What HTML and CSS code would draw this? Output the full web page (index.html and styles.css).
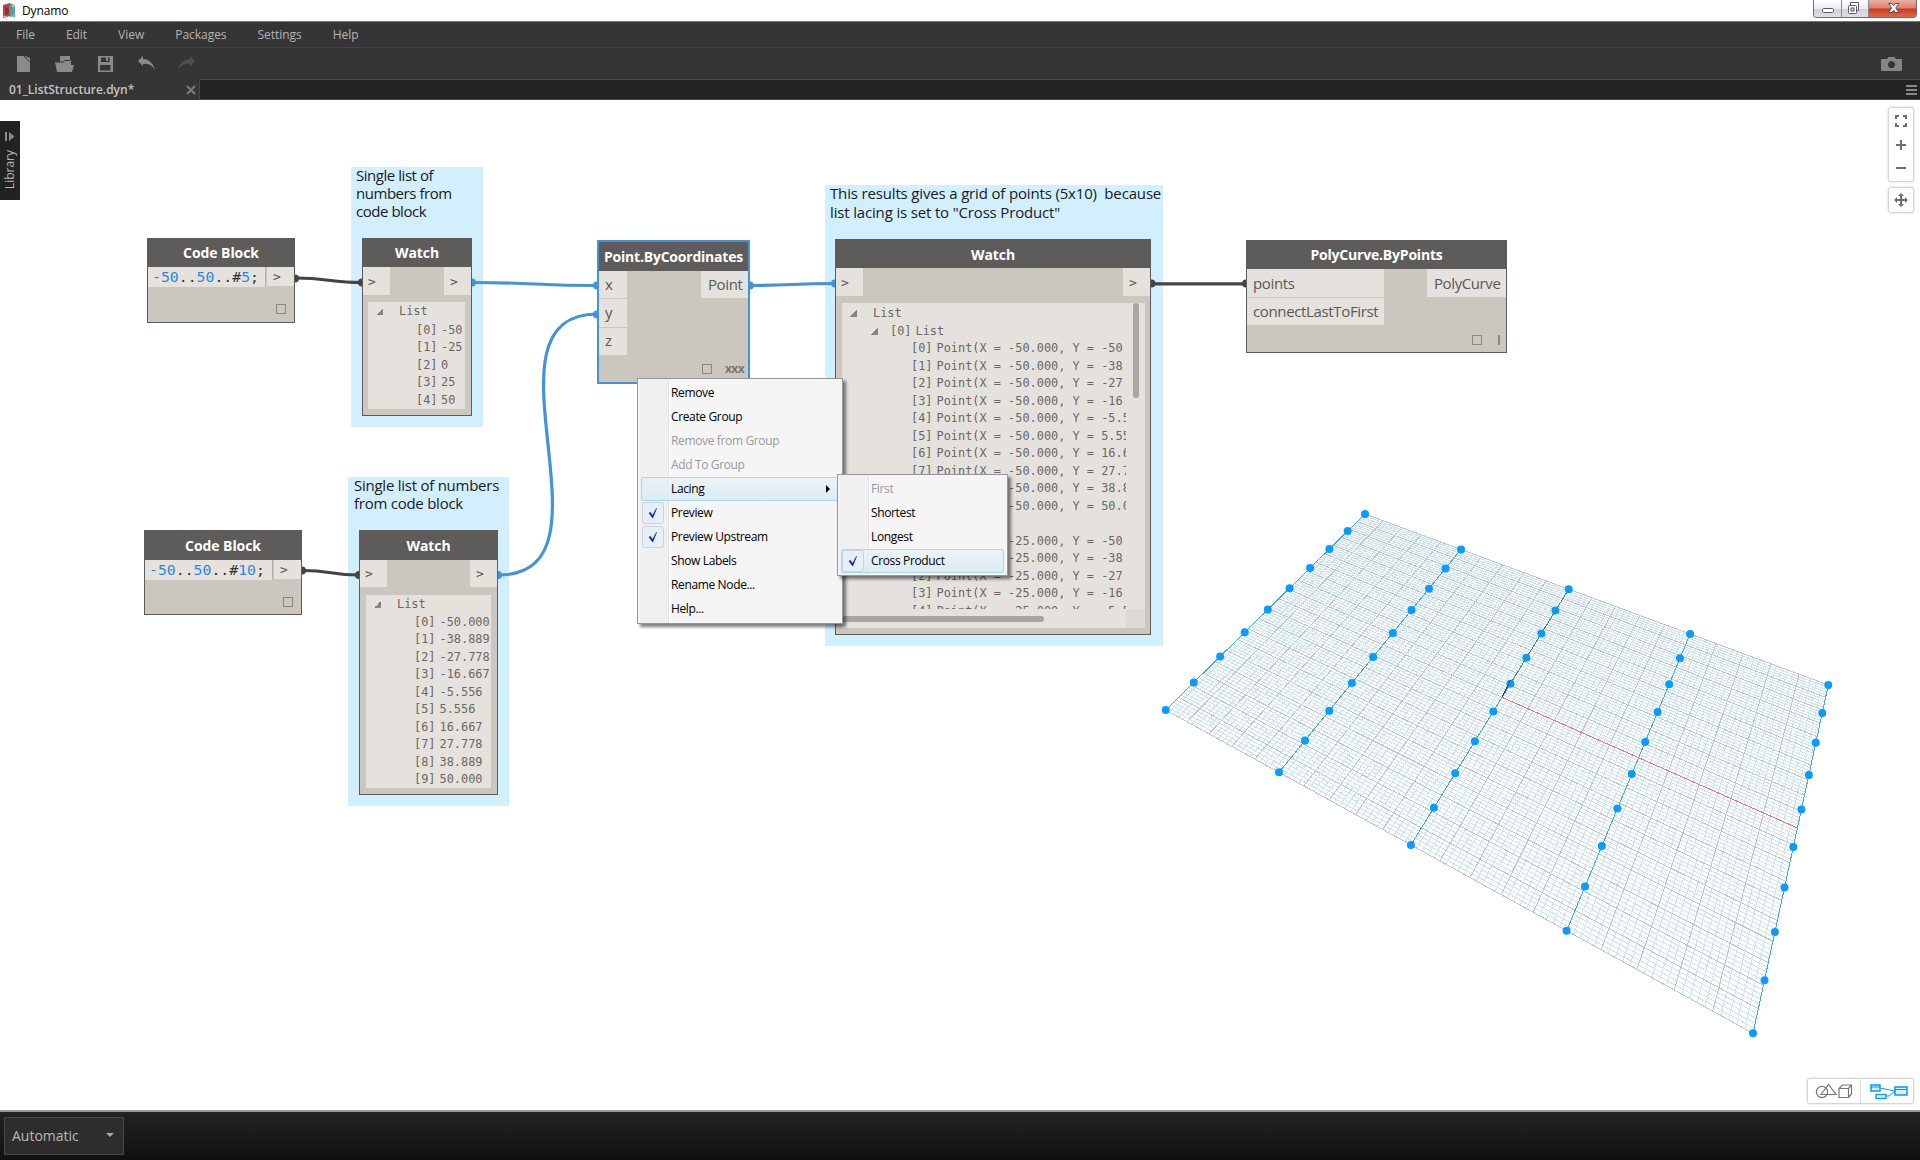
FILE: index.html
```html
<!DOCTYPE html>
<html lang="en">
<head>
<meta charset="utf-8">
<title>Dynamo</title>
<link rel="stylesheet" href="styles.css">
</head>
<body>
<div class="app">
  <header class="titlebar">
    <svg class="logo" width="14" height="17" viewBox="0 0 14 17"><path d="M1 3 8 1v13l-7 2z" fill="#b5474c"/><path d="M8 1l5 2v11l-5 1z" fill="#5d9fa8"/><path d="M3 4l4 3v4l-4 3z" fill="#8f2f3a"/><path d="M7 3l3 4-3 5z" fill="#6b8f5a"/><circle cx="3" cy="15" r="1.6" fill="#d9b8ae"/><circle cx="12" cy="14" r="1.6" fill="#8fb8ad"/><circle cx="11.500" cy="4" r="1.500" fill="#a7cbd8"/></svg>
    <span class="app-name">Dynamo</span>
    <div class="win-buttons">
      <span class="win min"><svg width="27" height="17"><rect x="8.500" y="8.500" width="11" height="4" rx="1" fill="#fff" stroke="#5a5a6c"/></svg></span>
      <span class="win max"><svg width="26" height="17"><path d="M8.500 5v-2.500h8v8h-2.500" fill="#fff" stroke="#5a5a6c"/><rect x="6.500" y="5.500" width="8" height="8" rx="1" fill="#fff" stroke="#5a5a6c"/><rect x="9" y="8" width="3" height="3" fill="#ddd" stroke="#5a5a6c"/></svg></span>
      <span class="win close"><svg width="47" height="17"><path d="M19.500 3.500h3.500l1.700 2.200 1.700-2.200h3.500l-3.200 4.400 3.200 4.600h-3.500l-1.700-2.400-1.700 2.400h-3.500l3.200-4.600z" fill="#fff" stroke="#5c4a54"/></svg></span>
    </div>
  </header>
  <nav class="menubar"><span>File</span><span>Edit</span><span>View</span><span>Packages</span><span>Settings</span><span>Help</span></nav>
  <div class="toolbar">
    <svg class="tools" width="200" height="30" fill="#8a8a8a">
      <path d="M17 8h8l5 6v10H17zM25 8l5 2v4z"/><path d="M24 8l5.500 6" stroke="#353535" fill="none"/>
      <path d="M60 8h10v6h-4l-2 2h-4zM55 14h8l2-2h6v12H57zM70 17h4l-2 7h-3z"/><path d="M56 14h7l2-1.500h5" stroke="#353535" fill="none"/>
      <path fill-rule="evenodd" d="M98 8h15v16H98zM101 9.500v4.500h8.500V9.500zM100 17v5.500h10.500V17z"/><rect x="106" y="9" width="2" height="4"/>
      <path d="M138 13l5-5v3c6 0 10 4 12 11-3-5-7-7-12-6v2z"/>
      <path d="M195 13l-5-5v3c-6 0-10 4-12 11 3-5 7-7 12-6v2z" fill="#505050"/>
    </svg>
    <svg class="camera" width="21" height="15"><path fill-rule="evenodd" fill="#858585" d="M1 2h5l1.500-2h6L15 2h5q1 0 1 1v10q0 1-1 1H1q-1 0-1-1V3q0-1 1-1zM10.500 4a3.600 3.600 0 1 0 .01 0z"/></svg>
  </div>
  <div class="tabbar">
    <div class="tab"><span>01_ListStructure.dyn*</span><svg width="10" height="10"><path d="M1 1l8 8M9 1l-8 8" stroke="#7c7c7c" stroke-width="2"/></svg></div>
    <svg class="burger" width="11" height="10"><path d="M0 1h11M0 5h11M0 9h11" stroke="#888" stroke-width="2"/></svg>
  </div>

  <main class="canvas">
    <svg class="scene" width="1920" height="1010" viewBox="0 100 1920 1010">
      <g id="grid"></g>
    </svg>

    <section class="group g1"><p>Single list of<br>numbers from<br>code block</p></section>
    <section class="group g2"><p>Single list of numbers<br>from code block</p></section>
    <section class="group g3"><p>This results gives a grid of points (5x10)&nbsp; because<br>list lacing is set to "Cross Product"</p></section>

    <svg class="scene wires" width="1920" height="1010" viewBox="0 100 1920 1010">
      <g stroke="#454442" fill="#454442">
        <path d="M296 278C325 278 332 282.500 362 282.500"/><circle cx="295" cy="278.500" r="4"/><circle cx="362" cy="282.500" r="4"/>
        <path d="M303 570.500C330 570.500 332 575 358 575"/><circle cx="302" cy="570.500" r="4"/><circle cx="359" cy="575" r="4"/>
        <path d="M1152 283.800H1246"/><circle cx="1151.500" cy="283.500" r="4"/><circle cx="1246" cy="283.500" r="4"/>
      </g>
      <g stroke="#4393da" fill="#4393da">
        <path d="M473 282.500C535 282.500 535 285.500 597 285.500"/><circle cx="472" cy="282.500" r="4"/><circle cx="597" cy="285.500" r="4"/>
        <path d="M499 575C625 575 471 314 597 314"/><circle cx="498" cy="575" r="4"/><circle cx="597" cy="314.500" r="4"/>
        <path d="M750 285.500C792 285.500 792 283.500 835 283.500"/><circle cx="750" cy="285.500" r="4"/><circle cx="835" cy="283.500" r="4"/>
      </g>
    </svg>

    <article class="node code c1">
      <h2>Code Block</h2>
      <div class="code-row"><code><b>-50</b>..<b>50</b>..#<b>5</b>;</code><span class="port out">&gt;</span></div>
      <footer><i class="box"></i></footer>
    </article>
    <article class="node code c2">
      <h2>Code Block</h2>
      <div class="code-row"><code><b>-50</b>..<b>50</b>..#<b>10</b>;</code><span class="port out">&gt;</span></div>
      <footer><i class="box"></i></footer>
    </article>

    <article class="node watch w1">
      <h2>Watch</h2>
      <div class="ports"><span class="port">&gt;</span><span class="port out">&gt;</span></div>
      <div class="tree">
        <div class="row root"><i class="tri"></i>List</div>
        <div class="row"><em>[0]</em>-50</div><div class="row"><em>[1]</em>-25</div><div class="row"><em>[2]</em>0</div><div class="row"><em>[3]</em>25</div><div class="row"><em>[4]</em>50</div>
      </div>
    </article>

    <article class="node watch w2">
      <h2>Watch</h2>
      <div class="ports"><span class="port">&gt;</span><span class="port out">&gt;</span></div>
      <div class="tree">
        <div class="row root"><i class="tri"></i>List</div>
        <div class="row"><em>[0]</em>-50.000</div><div class="row"><em>[1]</em>-38.889</div><div class="row"><em>[2]</em>-27.778</div><div class="row"><em>[3]</em>-16.667</div><div class="row"><em>[4]</em>-5.556</div><div class="row"><em>[5]</em>5.556</div><div class="row"><em>[6]</em>16.667</div><div class="row"><em>[7]</em>27.778</div><div class="row"><em>[8]</em>38.889</div><div class="row"><em>[9]</em>50.000</div>
      </div>
    </article>

    <article class="node point">
      <h2>Point.ByCoordinates</h2>
      <div class="ports">
        <div class="ins"><span class="port">x</span><span class="port">y</span><span class="port">z</span></div>
        <span class="port out">Point</span>
      </div>
      <footer><i class="box"></i><strong>xxx</strong></footer>
    </article>

    <article class="node watch w3">
      <h2>Watch</h2>
      <div class="ports"><span class="port">&gt;</span><span class="port out">&gt;</span></div>
      <div class="tree">
        <div class="view">
          <div class="row root"><i class="tri"></i>List</div>
          <div class="row sub"><i class="tri"></i><em>[0]</em>List</div>
          <div class="row"><em>[0]</em>Point(X = -50.000, Y = -50</div>
          <div class="row"><em>[1]</em>Point(X = -50.000, Y = -38</div>
          <div class="row"><em>[2]</em>Point(X = -50.000, Y = -27</div>
          <div class="row"><em>[3]</em>Point(X = -50.000, Y = -16</div>
          <div class="row"><em>[4]</em>Point(X = -50.000, Y = -5.5</div>
          <div class="row"><em>[5]</em>Point(X = -50.000, Y = 5.55</div>
          <div class="row"><em>[6]</em>Point(X = -50.000, Y = 16.6</div>
          <div class="row"><em>[7]</em>Point(X = -50.000, Y = 27.7</div>
          <div class="row"><em>[8]</em>Point(X = -50.000, Y = 38.8</div>
          <div class="row"><em>[9]</em>Point(X = -50.000, Y = 50.0</div>
          <div class="row sub"></div>
          <div class="row"><em>[0]</em>Point(X = -25.000, Y = -50</div>
          <div class="row"><em>[1]</em>Point(X = -25.000, Y = -38</div>
          <div class="row"><em>[2]</em>Point(X = -25.000, Y = -27</div>
          <div class="row"><em>[3]</em>Point(X = -25.000, Y = -16</div>
          <div class="row"><em>[4]</em>Point(X = -25.000, Y = -5.5</div>
        </div>
        <div class="vbar"><i></i></div>
        <div class="hbar"><i></i></div>
        <div class="corner"></div>
      </div>
    </article>

    <article class="node poly">
      <h2>PolyCurve.ByPoints</h2>
      <div class="ports">
        <div class="ins"><span class="port">points</span><span class="port">connectLastToFirst</span></div>
        <span class="port out">PolyCurve</span>
      </div>
      <footer><i class="box"></i><i class="bar"></i></footer>
    </article>

    <div class="menu main-menu">
      <div class="item"><span>Remove</span></div>
      <div class="item"><span>Create Group</span></div>
      <div class="item off"><span>Remove from Group</span></div>
      <div class="item off"><span>Add To Group</span></div>
      <div class="item hot"><span>Lacing</span><i class="arrow"></i></div>
      <div class="item"><i class="check"><svg width="10" height="12"><path d="M1 6l1.500-.5 2 3L8.500 1.500 4.700 11z" fill="#1b1ba0" stroke="#1b1ba0" stroke-width=".6"/></svg></i><span>Preview</span></div>
      <div class="item"><i class="check"><svg width="10" height="12"><path d="M1 6l1.500-.5 2 3L8.500 1.500 4.700 11z" fill="#1b1ba0" stroke="#1b1ba0" stroke-width=".6"/></svg></i><span>Preview Upstream</span></div>
      <div class="item"><span>Show Labels</span></div>
      <div class="item"><span>Rename Node...</span></div>
      <div class="item"><span>Help...</span></div>
    </div>
    <div class="menu sub-menu">
      <div class="item off"><span>First</span></div>
      <div class="item"><span>Shortest</span></div>
      <div class="item"><span>Longest</span></div>
      <div class="item hot"><i class="check"><svg width="10" height="12"><path d="M1 6l1.500-.5 2 3L8.500 1.500 4.700 11z" fill="#1b1ba0" stroke="#1b1ba0" stroke-width=".6"/></svg></i><span>Cross Product</span></div>
    </div>

    <aside class="library"><svg width="10" height="10"><path d="M0 0h2v9H0zM4 0l5.500 4.500L4 9z" fill="#8c8c8c"/></svg><span>Library</span></aside>

    <div class="controls">
      <div class="card zoomer">
        <svg width="12" height="12" fill="none" stroke="#6e6e6e" stroke-width="2"><path d="M1 4V1h3M8 1h3v3M11 8v3H8M4 11H1V8"/></svg>
        <svg width="10" height="10" stroke="#6e6e6e" stroke-width="2"><path d="M0 5h10M5 0v10"/></svg>
        <svg width="10" height="10" stroke="#6e6e6e" stroke-width="2"><path d="M0 5h10"/></svg>
      </div>
      <div class="card pan">
        <svg width="14" height="14" fill="#6e6e6e"><path d="M7 0l3 3H8v3h3V4l3 3-3 3V8H8v3h2l-3 3-3-3h2V8H3v2L0 7l3-3v2h3V3H4z"/></svg>
      </div>
    </div>
    <div class="card modes">
      <svg width="52" height="24" fill="none" stroke="#777" stroke-width="1.200"><circle cx="14" cy="13" r="5.600"/><path d="M13 15.500L20.500 5.500l7.500 10z"/><path d="M31 9.500h9.500v9H31zM31 9.500l3.500-3.500H43.500l-3 3.500M43.500 6v9l-3 3.500"/></svg>
      <svg class="graph" width="52" height="24" fill="#d9edfb" stroke="#0a98f5"><path d="M19 9l15 3M25 17h3l6-5" fill="none"/><rect x="10" y="6" width="9" height="6" stroke-width="1.500"/><rect x="15" y="15.500" width="10" height="4" stroke-width="1.300"/><rect x="34" y="8" width="12" height="8" stroke-width="1.500"/><path d="M10 8h9M34 10.500h12"/></svg>
    </div>
  </main>

  <footer class="statusbar"><div class="combo"><span>Automatic</span><i></i></div></footer>
</div>
<script src="grid.js"></script>
</body>
</html>
```

FILE: grid.js
```js
// Perspective ground plane: maps plane coordinates (-50..50) to screen positions.
const corners = { a: [1165.7, 710], b: [1753, 1033.3], c: [1828.3, 685], d: [1365, 514] };

function projector({ a, b, c, d }) {
  const dx1 = b[0] - c[0], dx2 = d[0] - c[0], sx = a[0] - b[0] + c[0] - d[0];
  const dy1 = b[1] - c[1], dy2 = d[1] - c[1], sy = a[1] - b[1] + c[1] - d[1];
  const det = dx1 * dy2 - dx2 * dy1;
  const g = (sx * dy2 - dx2 * sy) / det;
  const h = (dx1 * sy - sx * dy1) / det;
  return (px, py) => {
    const u = (px + 50) / 100, v = (py + 50) / 100, w = g * u + h * v + 1;
    return [
      ((b[0] - a[0] + g * b[0]) * u + (d[0] - a[0] + h * d[0]) * v + a[0]) / w,
      ((b[1] - a[1] + g * b[1]) * u + (d[1] - a[1] + h * d[1]) * v + a[1]) / w
    ].map(n => n.toFixed(1));
  };
}

const at = projector(corners);
const seg = (x1, y1, x2, y2) => `M${at(x1, y1)}L${at(x2, y2)}`;
let minor = '', major = '', curves = '', dots = '';
for (let i = -50; i <= 50; i++) {
  const d = seg(i, -50, i, 50) + seg(-50, i, 50, i);
  if (i % 5 === 0) major += d; else minor += d;
}
for (let x = -50; x <= 50; x += 25) {
  curves += seg(x, -50, x, 50);
  for (let k = 0; k < 10; k++) {
    const [cx, cy] = at(x, -50 + k * 100 / 9);
    dots += `<circle class="dot" cx="${cx}" cy="${cy}" r="4"/>`;
  }
}
document.getElementById('grid').innerHTML =
  `<path class="minor" d="${minor}"/><path class="major" d="${major}"/>` +
  `<path class="curve" d="${curves}"/>${dots}` +
  `<path class="axis-x" d="${seg(0, 0, 50, 0)}"/><path class="axis-y" d="${seg(0, 0, 0, 50)}"/>` +
  `<path class="axis-z" d="M${at(0, 0)}L1510.5 680"/>`;
```

FILE: styles.css
```css
* { box-sizing: border-box; }
body { margin: 0; font-family: "Open Sans", "Liberation Sans", sans-serif; background: #fff; overflow: hidden; }
.app { display: flex; flex-direction: column; width: 1920px; height: 1160px; }
svg { display: block; flex: none; }
i, em { font-style: normal; }

.titlebar { height: 22px; display: flex; align-items: flex-start; background: #fff; border-bottom: 1px solid #777; padding: 2px 3px 0 2px; }
.app-name { font-size: 12px; line-height: 17px; margin-left: 6px; color: #000; letter-spacing: -.1px; }
.win-buttons { display: flex; margin: -2px 0 0 auto; height: 18px; border: 1px solid #6b6b74; border-top: 0; border-radius: 0 0 4px 4px; overflow: hidden; }
.win { height: 17px; background: linear-gradient(#fdfdfd, #ededf0 50%, #cfcfd6 52%, #dedee4); border-right: 1px solid #8a8a92; }
.win.close { background: linear-gradient(#eab0a2, #dd7f6b 48%, #c8391c 52%, #dd6a4c); border-right: 0; }

.menubar { height: 26px; flex: none; background: #353535; border-bottom: 1px solid #444; display: flex; gap: 31px; padding-left: 16px; }
.menubar span { font-size: 12px; line-height: 25px; color: #b4b4b4; letter-spacing: -.03px; }
.toolbar { height: 31px; flex: none; background: #353535; display: flex; align-items: flex-start; }
.camera { margin: 9px 18px 0 auto; }
.tabbar { height: 21px; flex: none; background: #232323; border-top: 1px solid #484848; border-bottom: 1px solid #484848; display: flex; align-items: center; justify-content: space-between; }
.tab { width: 200px; height: 21px; margin-top: -1px; background: #353535; border-right: 1px solid #484848; display: flex; align-items: center; justify-content: space-between; padding: 1px 3px 0 9px; font-size: 12px; font-weight: 600; color: #c4c4c4; }
.burger { margin-right: 3px; }

.canvas { position: relative; height: 1010px; flex: none; overflow: hidden; }
.scene { position: absolute; left: 0; top: 0; }
.wires path { stroke-width: 3.2; fill: none; }
.wires circle { stroke: none; }
.minor, .major, .curve, .axis-x, .axis-y, .axis-z { fill: none; stroke-width: 1; shape-rendering: crispEdges; }
.minor { stroke: #d0e4ef; }
.major { stroke: #bcc8ce; }
.curve { stroke: #42a7ea; }
.dot { fill: #0a9bff; }
.axis-x { stroke: #ff6e6e; }
.axis-y { stroke: #2d9a86; }
.axis-z { stroke: #1c2fc0; }

.group { position: absolute; background: #d2efff; padding: 0 5px; }
.group p { margin: -1px 0 0; font-size: 15px; line-height: 18px; color: #1a1a1a; white-space: nowrap; letter-spacing: -.46px; }
.g1 { left: 351px; top: 67px; width: 132px; height: 260px; }
.g2 { left: 348px; top: 377px; width: 161px; height: 329px; padding-left: 6px; }
.g2 p { letter-spacing: -.25px; }
.g3 { left: 825px; top: 85px; width: 338px; height: 461px; }
.g3 p { line-height: 18.5px; letter-spacing: -.16px; }

.node { position: absolute; background: #cbc6be; border: 1px solid #5e5c5a; display: flex; flex-direction: column; color: #5a5855; }
.node h2 { margin: 0; height: 28px; flex: none; background: #5e5c5a; color: #fff; font-size: 14px; font-weight: 700; line-height: 28px; text-align: center; white-space: nowrap; letter-spacing: -.08px; }
.port { background: #e5e2dd; font-size: 15px; display: flex; align-items: center; }
.node footer { flex: 1; display: flex; justify-content: flex-end; align-items: flex-start; }
.box { width: 10px; height: 10px; border: 1px solid #8b8883; }

.code-row { display: flex; justify-content: space-between; align-items: flex-start; gap: 1px; }
.code-row code { flex: 1; height: 20px; background: #e5e2dd; border-right: 1px solid #b5b1ab; padding-left: 4px; font: 14.8px/19px "DejaVu Sans Mono", monospace; color: #333; white-space: pre; }
.code-row code b { font-weight: 400; color: #2f86e2; }
.code-row .port, .watch .port { width: 27px; font: 13px "DejaVu Sans Mono", monospace; padding-left: 5px; }
.code-row .port { height: 19px; padding-left: 6px; }
.code footer { padding: 17px 8px 0 0; }
.c1 { left: 147px; top: 138px; width: 148px; height: 85px; }
.c2 { left: 144px; top: 430px; width: 158px; height: 85px; }
.c2 h2 { height: 29px; line-height: 30px; }

.ports { display: flex; justify-content: space-between; align-items: flex-start; }
.watch .port { height: 28px; }
.watch .port.out { padding-left: 6px; }
.tree { margin: 7px 6px 6px 5px; flex: 1; background: #e5e2dd; overflow: hidden; font: 11.9px/17.5px "DejaVu Sans Mono", monospace; color: #6a6764; }
.row { display: flex; height: 17.5px; padding-left: 49px; white-space: pre; }
.row em { width: 25.5px; flex: none; }
.row.root { padding-left: 9px; height: 18.5px; padding-top: 1px; }
.row.sub { padding-left: 29px; }
.tri { width: 7px; height: 7px; margin: 5px 16px 0 0; background: linear-gradient(135deg, transparent 50%, #858380 50%); flex: none; }
.sub .tri { margin-right: 12px; }
.w1 { left: 362px; top: 138px; width: 110px; height: 178px; }
.w1 .row { padding-left: 48px; }
.w1 .row em { width: 25px; }
.w1 .row.root { padding-left: 8px; height: 19.5px; }
.w2 { left: 359px; top: 430px; width: 139px; height: 265px; }
.w2 h2 { height: 29px; line-height: 30px; }
.w2 .port { height: 27px; }
.w2 .tree { margin-top: 8px; margin-left: 6px; }
.w2 .row { padding-left: 48px; }
.w2 .row.root { padding-left: 8px; }
.w3 { left: 835px; top: 139px; width: 316px; height: 396px; }
.w3 h2 { line-height: 29px; }
.w3 .tree { display: grid; grid-template: 306px 19px / 284px 19px; margin: 7px 5px 6px 6px; flex: none; }
.w3 .row { padding-left: 69px; }
.w3 .row.root { padding-left: 8px; }
.w3 .row.sub { padding-left: 29px; }
.view { overflow: hidden; padding-top: 1px; }
.vbar { display: flex; justify-content: center; }
.vbar i { width: 6px; height: 95px; border-radius: 3px; background: #a9a6a1; }
.hbar { display: flex; align-items: center; }
.hbar i { width: 202px; height: 6px; border-radius: 3px; background: #a9a6a1; }
.corner { background: #dcdad6; }

.point { left: 597px; top: 140px; width: 153px; height: 144px; border: 2px solid #4393da; }
.point h2 { height: 29px; line-height: 29px; letter-spacing: -.22px; }
.ins { display: flex; flex-direction: column; gap: 1px; }
.point .ins .port { width: 28px; height: 27.3px; padding: 0 0 2px 6px; }
.point .ports > .out { width: 47px; height: 27px; padding: 0 0 2px 7px; letter-spacing: -.4px; }
.point footer { padding: 9px 4px 0 0; gap: 13px; }
.point footer strong { font-size: 12px; line-height: 9px; letter-spacing: -.6px; color: #7a7773; }
.poly { left: 1246px; top: 140px; width: 261px; height: 113px; }
.poly h2 { letter-spacing: -.2px; }
.poly .ins .port { width: 137px; height: 27.5px; padding-left: 6px; letter-spacing: -.35px; }
.poly .ports > .out { width: 79px; height: 28px; padding-left: 7px; letter-spacing: -.4px; }
.poly footer { padding: 10px 6px 0 0; gap: 16px; }
.bar { width: 2px; height: 10px; background: #8b8883; margin-right: 0; }

.menu { position: absolute; background: linear-gradient(90deg, #f5f5f5 2px, #f0f0f0 2px, #f0f0f0 30px, #e2e2e2 30px, #e2e2e2 31px, #fff 31px, #fff 32px, #f5f5f5 32px); border: 1px solid #979797; box-shadow: 3px 3px 3px rgba(0, 0, 0, .5); padding: 2px 3px; font-size: 12px; color: #000; }
.main-menu { left: 637px; top: 278px; width: 206px; height: 246px; }
.sub-menu { left: 837px; top: 374px; width: 171px; height: 102px; }
.item { display: flex; align-items: center; height: 24px; border: 1px solid transparent; border-radius: 2px; position: relative; }
.item span { margin-left: 29px; padding-bottom: 2px; letter-spacing: -.36px; }
.item.off { color: #9a9a9a; }
.item.hot { border-color: #a8d8ec; background: linear-gradient(rgba(230, 241, 247, .7), rgba(214, 235, 244, .8)); }
.check { width: 22px; height: 22px; border: 1px solid #ccd3e8; border-radius: 3px; background: #e6eef6; display: flex; align-items: center; justify-content: center; }
.item .check + span { margin-left: 7px; }
.arrow { margin: 0 8px 0 auto; border: 4px solid transparent; border-left-color: #000; border-right: 0; }

.library { position: absolute; left: 0; top: 21px; width: 20px; height: 79px; background: #222; display: flex; flex-direction: column; align-items: center; padding-top: 11px; gap: 8px; }
.library span { writing-mode: vertical-rl; transform: rotate(180deg); font-size: 12px; line-height: 18px; color: #b4b4b4; }

.controls { position: absolute; right: 7px; top: 8px; display: flex; flex-direction: column; gap: 7px; }
.card { background: #fff; border-radius: 2px; box-shadow: 0 0 2px 1px rgba(0, 0, 0, .22); display: flex; align-items: center; }
.zoomer { flex-direction: column; width: 24px; height: 73px; padding-top: 7px; gap: 13px; }
.pan { width: 24px; height: 24px; justify-content: center; }
.modes { position: absolute; right: 7px; top: 979px; width: 105px; height: 24px; }
.graph { border-left: 1px solid #ddd; }

.statusbar { height: 50px; flex: none; border-top: 2px solid #999; background: linear-gradient(#232323, #101010); padding: 5px 4px; }
.combo { width: 120px; height: 38px; background: #2d2d2d; border: 1px solid #484848; display: flex; align-items: center; justify-content: space-between; padding: 0 9px 2px 7px; font-size: 14px; color: #b8b8b8; }
.combo i { border: 4px solid transparent; border-top-color: #aaa; border-bottom: 0; }
```
